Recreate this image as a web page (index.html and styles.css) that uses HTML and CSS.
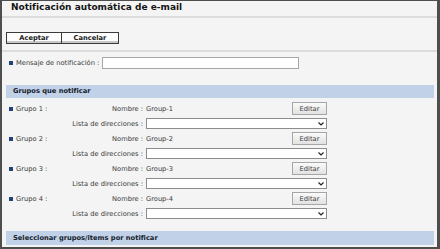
FILE: index.html
```html
<!DOCTYPE html>
<html lang="es">
<head>
    <meta charset="UTF-8">
    <meta name="viewport" content="width=device-width, initial-scale=1.0">
    <title>Notificación automática de e-mail</title>
    <link rel="stylesheet" href="styles.css">
</head>
<body>
    <div class="frame">
        <div class="header">
            <h1>Notificación automática de e-mail</h1>
        </div>

        <div class="actions">
            <button class="btn-main">Aceptar</button><button class="btn-main">Cancelar</button>
        </div>

        <div class="message-row">
            <span class="bullet"></span>
            <label for="msg">Mensaje de notificación :</label>
            <input type="text" id="msg" class="text-input">
        </div>

        <div class="section-bar">Grupos que notificar</div>

        <div class="groups">
            <div class="group">
                <div class="group-name"><span class="bullet"></span>Grupo 1 :</div>
                <div class="field-label">Nombre :</div>
                <div class="field-value">Group-1</div>
                <button class="btn-edit">Editar</button>
                <div class="field-label label-wide">Lista de direcciones :</div>
                <div class="select-box">
                    <select></select>
                    <svg class="chevron" width="6" height="4" viewBox="0 0 6 4"><path d="M0.5 0.5 L3 3 L5.5 0.5" fill="none" stroke="#222" stroke-width="1.2"/></svg>
                </div>
            </div>
            <div class="group">
                <div class="group-name"><span class="bullet"></span>Grupo 2 :</div>
                <div class="field-label">Nombre :</div>
                <div class="field-value">Group-2</div>
                <button class="btn-edit">Editar</button>
                <div class="field-label label-wide">Lista de direcciones :</div>
                <div class="select-box">
                    <select></select>
                    <svg class="chevron" width="6" height="4" viewBox="0 0 6 4"><path d="M0.5 0.5 L3 3 L5.5 0.5" fill="none" stroke="#222" stroke-width="1.2"/></svg>
                </div>
            </div>
            <div class="group">
                <div class="group-name"><span class="bullet"></span>Grupo 3 :</div>
                <div class="field-label">Nombre :</div>
                <div class="field-value">Group-3</div>
                <button class="btn-edit">Editar</button>
                <div class="field-label label-wide">Lista de direcciones :</div>
                <div class="select-box">
                    <select></select>
                    <svg class="chevron" width="6" height="4" viewBox="0 0 6 4"><path d="M0.5 0.5 L3 3 L5.5 0.5" fill="none" stroke="#222" stroke-width="1.2"/></svg>
                </div>
            </div>
            <div class="group">
                <div class="group-name"><span class="bullet"></span>Grupo 4 :</div>
                <div class="field-label">Nombre :</div>
                <div class="field-value">Group-4</div>
                <button class="btn-edit">Editar</button>
                <div class="field-label label-wide">Lista de direcciones :</div>
                <div class="select-box">
                    <select></select>
                    <svg class="chevron" width="6" height="4" viewBox="0 0 6 4"><path d="M0.5 0.5 L3 3 L5.5 0.5" fill="none" stroke="#222" stroke-width="1.2"/></svg>
                </div>
            </div>
        </div>

        <div class="section-bar section-bottom">Seleccionar grupos/items por notificar</div>
    </div>
</body>
</html>
```

FILE: styles.css
```css
body {
    margin: 0;
    font-family: "DejaVu Sans", Verdana, sans-serif;
    font-size: 6.7px;
    color: #3a3a3a;
}

.frame {
    width: 440px;
    height: 249px;
    box-sizing: border-box;
    background-color: #f4f4f4;
    border-style: solid;
    border-color: #4e4e4e;
    border-width: 1px 3px 2px 2px;
    display: flex;
    flex-direction: column;
}

.header {
    height: 15px;
    padding-left: 9px;
    border-bottom: 2px solid #dcdcdc;
}

.header h1 {
    margin: 0;
    font-size: 9px;
    line-height: 12px;
    font-weight: bold;
    color: #151515;
}

.actions {
    display: flex;
    padding: 14px 0 6px 4px;
    border-bottom: 2px solid #dcdcdc;
}

.btn-main {
    height: 12px;
    padding: 0;
    margin: 0;
    border: 1px solid #3a3a3a;
    background-color: #fdfdfd;
    box-shadow: inset 0 -2px 0 #c8c8c8;
    font-family: inherit;
    font-size: 6.7px;
    font-weight: bold;
    color: #1a1a1a;
    line-height: 9px;
    width: 56px;
}

.btn-main + .btn-main {
    width: 57px;
    border-left: none;
}

.message-row {
    display: flex;
    align-items: center;
    margin-top: 5px;
    padding-left: 7px;
}

.bullet {
    display: inline-block;
    width: 4px;
    height: 4px;
    background-color: #23407a;
    margin-right: 3px;
    flex-shrink: 0;
}

.message-row label {
    margin-right: 3px;
}

.text-input {
    width: 197px;
    height: 12px;
    box-sizing: border-box;
    border: 1px solid #a8a8a8;
    background-color: white;
    padding: 0;
    margin: 0;
}

.section-bar {
    margin: 16px 3px 0 4px;
    height: 13px;
    line-height: 13px;
    padding-left: 7px;
    background-color: #c1d1e8;
    font-weight: bold;
    color: #161c2c;
}

.section-bottom {
    margin-top: 12px;
    height: 14px;
    line-height: 14px;
}

.groups {
    padding: 4px 0 0 7px;
    display: flex;
    flex-direction: column;
    gap: 3px;
}

.group {
    display: grid;
    grid-template-columns: 60px 77px 146px 35px;
    grid-template-rows: 13px 11px;
    row-gap: 3px;
    align-items: center;
}

.group-name {
    display: flex;
    align-items: center;
}

.field-label {
    text-align: right;
    padding-right: 3px;
}

.label-wide {
    grid-column: 2;
}

.btn-edit {
    height: 13px;
    width: 35px;
    padding: 0;
    margin: 0;
    border: 1px solid #a6a6a6;
    background: linear-gradient(#fafafa, #e2e2e2);
    font-family: inherit;
    font-size: 6.7px;
    color: #404040;
}

.select-box {
    grid-column: 3 / 5;
    position: relative;
    height: 11px;
}

.select-box select {
    appearance: none;
    width: 100%;
    height: 11px;
    box-sizing: border-box;
    border: 1px solid #8c8c8c;
    background-color: white;
    margin: 0;
    padding: 0;
    display: block;
}

.chevron {
    position: absolute;
    right: 3px;
    top: 4px;
}
```
